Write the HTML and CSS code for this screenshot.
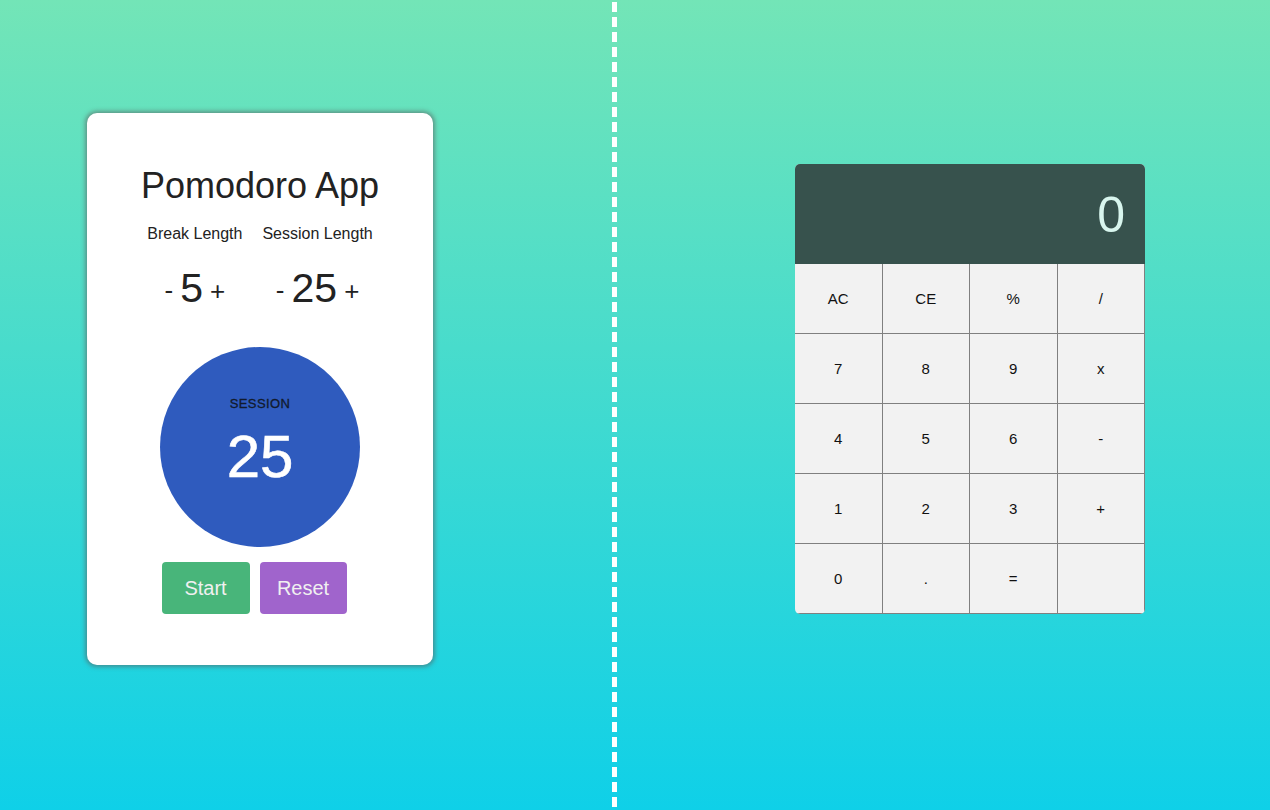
FILE: index.html
```html
<!DOCTYPE html>
<html>
<head>
<meta charset="utf-8">
<link rel="stylesheet" href="styles.css">
</head>
<body>
<div class="page">
  <section class="left">
    <div class="card">
      <h1 class="title">Pomodoro App</h1>
      <div class="settings">
        <div class="setting">
          <div class="label">Break Length</div>
          <div class="control"><span class="minus">-</span><span class="value">5</span><span class="plus">+</span></div>
        </div>
        <div class="setting">
          <div class="label">Session Length</div>
          <div class="control"><span class="minus">-</span><span class="value">25</span><span class="plus">+</span></div>
        </div>
      </div>
      <div class="timer">
        <div class="timer-label">SESSION</div>
        <div class="timer-value">25</div>
      </div>
      <div class="actions">
        <button class="btn start">Start</button>
        <button class="btn reset">Reset</button>
      </div>
    </div>
  </section>
  <div class="divider"></div>
  <section class="right">
    <div class="calc">
      <div class="display">0</div>
      <div class="keys">
        <div class="key">AC</div><div class="key">CE</div><div class="key">%</div><div class="key">/</div>
        <div class="key">7</div><div class="key">8</div><div class="key">9</div><div class="key">x</div>
        <div class="key">4</div><div class="key">5</div><div class="key">6</div><div class="key">-</div>
        <div class="key">1</div><div class="key">2</div><div class="key">3</div><div class="key">+</div>
        <div class="key">0</div><div class="key">.</div><div class="key">=</div><div class="key"></div>
      </div>
    </div>
  </section>
</div>
</body>
</html>
```
FILE: styles.css
```css
* { box-sizing: border-box; }
html, body { margin: 0; height: 100%; }
body {
  font-family: "Liberation Sans", Arial, sans-serif;
  background: linear-gradient(to bottom, #73e5b7 0%, #0fd0e8 100%);
  color: #222;
}
.page {
  display: flex;
  height: 810px;
}
.left {
  width: 612px;
  padding: 113px 0 0 87px;
}
.card {
  width: 346px;
  height: 552px;
  background: #fff;
  border-radius: 10px;
  box-shadow: 0 0 4px 2px rgba(90, 90, 90, 0.55);
  display: flex;
  flex-direction: column;
  align-items: center;
  padding-top: 52px;
}
.title {
  margin: 0;
  font-weight: normal;
  font-size: 36px;
  line-height: 42px;
  color: #222;
}
.settings {
  display: flex;
  gap: 20px;
  margin-top: 17px;
}
.setting {
  display: flex;
  flex-direction: column;
  align-items: center;
}
.label {
  font-size: 16px;
  line-height: 20px;
  color: #222;
}
.control {
  margin-top: 20px;
  height: 48px;
  display: flex;
  align-items: center;
  gap: 7px;
  color: #222;
}
.minus, .plus { font-size: 26px; line-height: 30px; }
.minus { padding-top: 4px; }
.plus { padding-top: 6px; }
.value { font-size: 41px; line-height: 48px; }
.timer {
  margin-top: 35px;
  width: 200px;
  height: 200px;
  border-radius: 50%;
  background: #2f5bbe;
  display: flex;
  flex-direction: column;
  align-items: center;
  padding-top: 49px;
}
.timer-label {
  font-size: 13px;
  color: #111a2c;
  letter-spacing: 0.4px;
  line-height: 16px;
  -webkit-text-stroke: 0.3px #111a2c;
}
.timer-value {
  margin-top: 11px;
  font-size: 60px;
  line-height: 68px;
  color: #fff;
  -webkit-text-stroke: 0.6px #fff;
}
.actions {
  display: flex;
  gap: 10px;
  margin-top: 15px;
  margin-right: 12px;
}
.btn {
  border: none;
  border-radius: 4px;
  height: 52px;
  width: 88px;
  font-family: "Liberation Sans", Arial, sans-serif;
  font-size: 20px;
  color: #f0f0f0;
}
.start { background: #48b57a; }
.reset { background: #a064cc; width: 87px; }
.divider {
  width: 5px;
  height: 810px;
  background: repeating-linear-gradient(to bottom, #fff 0, #fff 10px, transparent 10px, transparent 15px);
  margin-top: 2px;
}
.right {
  flex: 1;
  padding: 164px 0 0 178px;
}
.calc {
  width: 350px;
  border-radius: 5px;
  overflow: hidden;
  background: #f2f2f2;
}
.display {
  height: 100px;
  background: #37524d;
  color: #d8f6ee;
  font-size: 50px;
  text-align: right;
  padding: 23px 20px 0 0;
  line-height: 56px;
}
.keys {
  display: grid;
  grid-template-columns: repeat(4, 1fr);
  grid-auto-rows: 70px;
}
.key {
  display: flex;
  align-items: center;
  justify-content: center;
  font-size: 15px;
  color: #111;
  border-right: 1px solid #808080;
  border-bottom: 1px solid #808080;
}
```
